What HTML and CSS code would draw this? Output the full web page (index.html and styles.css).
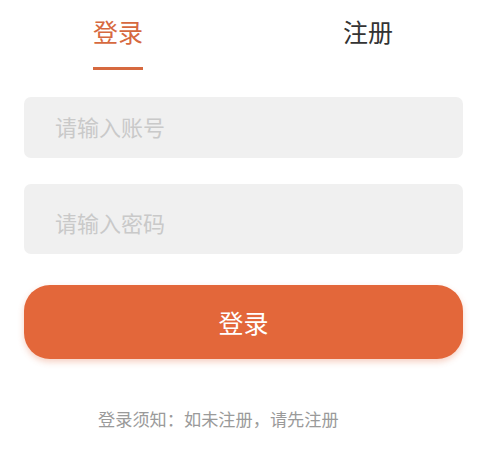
FILE: index.html
```
<!DOCTYPE html>
<html lang="zh">
<head>
<meta charset="utf-8">
<title>登录</title>
<link rel="stylesheet" href="styles.css">
</head>
<body>
<div class="page">
  <div class="tabs">
    <div class="tab tab-active">登录</div>
    <div class="tab">注册</div>
  </div>
  <div class="form">
    <div class="field field-account"><span class="placeholder">请输入账号</span></div>
    <div class="field field-password"><span class="placeholder">请输入密码</span></div>
    <button class="submit">登录</button>
  </div>
  <p class="notice"><span class="seg">登录须知</span><span class="punct">：</span><span class="seg">如未注册</span><span class="punct">，</span><span class="seg">请先注册</span></p>
</div>
</body>
</html>
```
FILE: styles.css
```
html, body {
  margin: 0;
  padding: 0;
  background: #ffffff;
}
body {
  font-family: "Noto Sans CJK SC", "Noto Sans", sans-serif;
  width: 488px;
  height: 449px;
  overflow: hidden;
}
.tabs {
  display: flex;
  justify-content: space-between;
  padding: 19px 95px 0 93px;
}
.tab {
  display: flex;
  flex-direction: column;
  align-items: center;
  width: 50px;
  font-size: 25px;
  line-height: 25px;
  color: #333333;
}
.tab::after {
  content: "";
  display: block;
  width: 50px;
  height: 3px;
  margin-top: 23px;
  background: transparent;
}
.tab-active {
  color: #d6693f;
}
.tab-active::after {
  background: #d6693f;
}
.form {
  display: flex;
  flex-direction: column;
  padding: 0 25px 0 24px;
  margin-top: 27px;
}
.field {
  display: flex;
  align-items: center;
  box-sizing: border-box;
  background: #f0f0f0;
  border-radius: 7px;
  padding-left: 31px;
}
.field-account {
  height: 61px;
  padding-bottom: 4px;
}
.field-password {
  height: 70px;
  margin-top: 26px;
  padding-top: 6px;
}
.placeholder {
  font-size: 22px;
  line-height: 22px;
  color: #c9c9c9;
}
.submit {
  margin-top: 31px;
  height: 74px;
  border: none;
  border-radius: 26px;
  background: #e3673a;
  color: #ffffff;
  font-family: inherit;
  font-size: 25px;
  line-height: 25px;
  padding: 0;
  box-shadow: 0 3px 6px rgba(226, 103, 58, 0.3);
}
.notice {
  margin: 51px 0 0 0;
  padding-left: 98px;
  font-size: 17.2px;
  line-height: 17px;
  color: #9a9a9a;
}
.punct {
  display: inline-block;
  width: 1em;
}
```
